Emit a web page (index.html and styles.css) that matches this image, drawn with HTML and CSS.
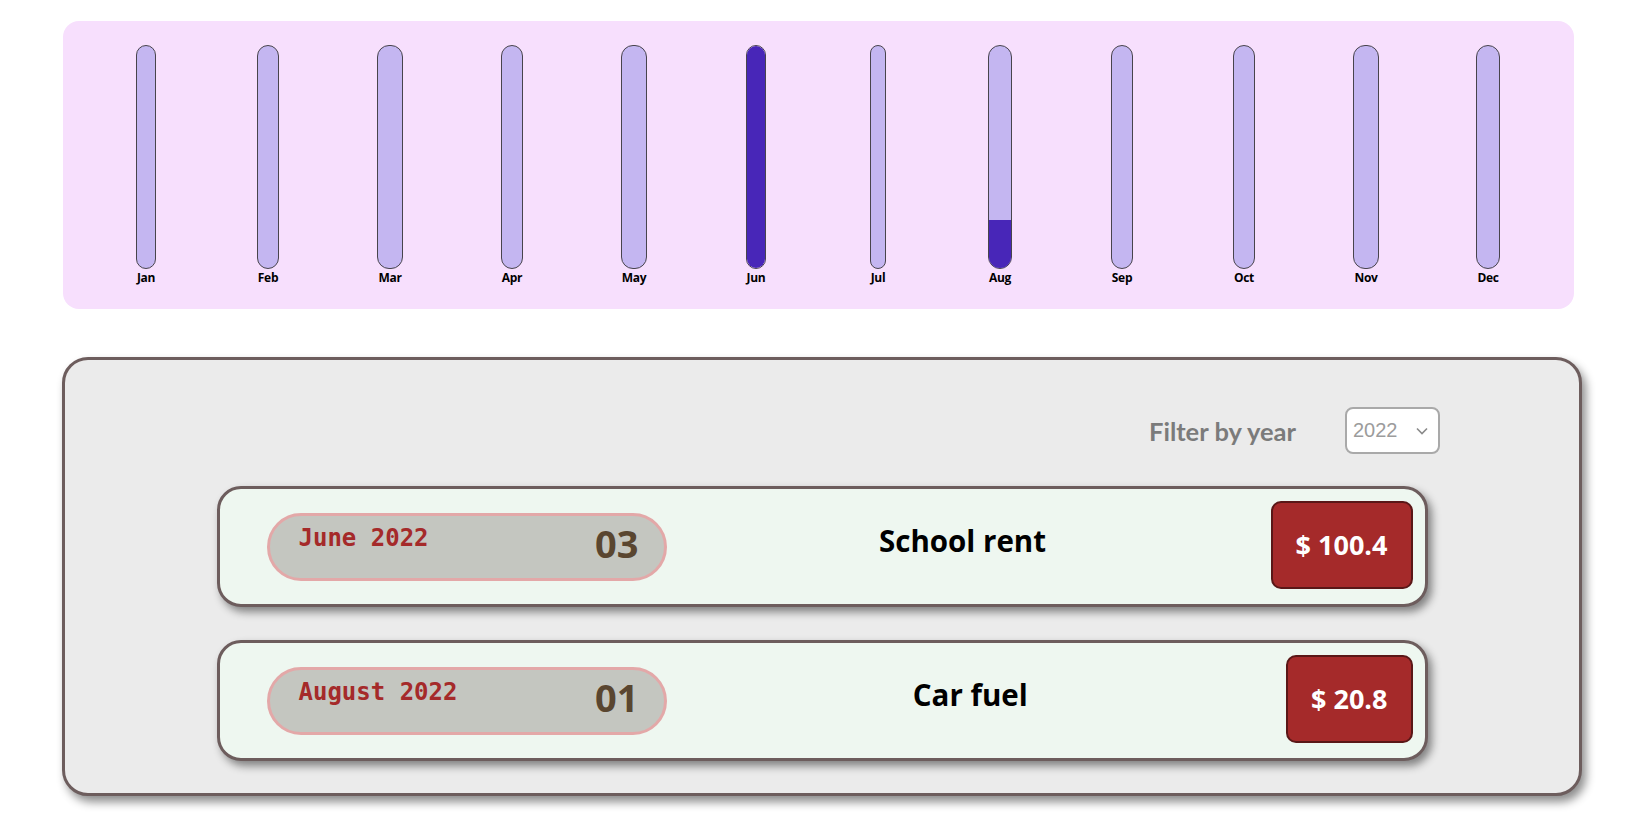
FILE: index.html
```html
<!DOCTYPE html>
<html lang="en">
<head>
<meta charset="utf-8">
<title>Expenses</title>
<link rel="stylesheet" href="styles.css">
</head>
<body>
<div class="page">
  <section class="chart">
    <div class="col"><div class="bar"><div class="fill" style="height:0%"></div></div><span class="lbl">Jan</span></div>
    <div class="col"><div class="bar"><div class="fill" style="height:0%"></div></div><span class="lbl">Feb</span></div>
    <div class="col"><div class="bar"><div class="fill" style="height:0%"></div></div><span class="lbl">Mar</span></div>
    <div class="col"><div class="bar"><div class="fill" style="height:0%"></div></div><span class="lbl">Apr</span></div>
    <div class="col"><div class="bar"><div class="fill" style="height:0%"></div></div><span class="lbl">May</span></div>
    <div class="col"><div class="bar"><div class="fill" style="height:100%"></div></div><span class="lbl">Jun</span></div>
    <div class="col"><div class="bar"><div class="fill" style="height:0%"></div></div><span class="lbl">Jul</span></div>
    <div class="col"><div class="bar"><div class="fill" style="height:21.5%"></div></div><span class="lbl">Aug</span></div>
    <div class="col"><div class="bar"><div class="fill" style="height:0%"></div></div><span class="lbl">Sep</span></div>
    <div class="col"><div class="bar"><div class="fill" style="height:0%"></div></div><span class="lbl">Oct</span></div>
    <div class="col"><div class="bar"><div class="fill" style="height:0%"></div></div><span class="lbl">Nov</span></div>
    <div class="col"><div class="bar"><div class="fill" style="height:0%"></div></div><span class="lbl">Dec</span></div>
  </section>

  <section class="card">
    <div class="filter">
      <span class="filter-label">Filter by year</span>
      <div class="select">
        <span>2022</span>
        <svg class="chev" width="12" height="8" viewBox="0 0 12 8"><path d="M1 1.5 L6 6.5 L11 1.5" fill="none" stroke="#8a8a8a" stroke-width="1.6"/></svg>
      </div>
    </div>

    <ul class="items">
      <li class="item">
        <div class="date">
          <span class="month">June 2022</span>
          <span class="day">03</span>
        </div>
        <h2 class="title">School rent</h2>
        <div class="amount">$ 100.4</div>
      </li>
      <li class="item">
        <div class="date">
          <span class="month">August 2022</span>
          <span class="day">01</span>
        </div>
        <h2 class="title">Car fuel</h2>
        <div class="amount">$ 20.8</div>
      </li>
    </ul>
  </section>
</div>
</body>
</html>
```
FILE: styles.css
```css
* { box-sizing: border-box; }
html, body { margin: 0; padding: 0; background: #ffffff; }
body { font-family: "Open Sans", "Noto Sans", sans-serif; }

.page {
  padding: 21px 0 40px 63px;
}

/* chart */
.chart {
  width: 1511px;
  height: 288px;
  background: #f7dffd;
  border-radius: 16px;
  padding: 24px 25px 0 22px;
  display: grid;
  grid-template-columns: repeat(12, 1fr);
  justify-items: center;
  align-items: start;
}
.col {
  display: inline-flex;
  flex-direction: column;
  align-items: stretch;
}
.bar {
  height: 224px;
  border: 1px solid #48444c;
  border-radius: 12px;
  background: #c4b6f1;
  overflow: hidden;
  display: flex;
  flex-direction: column;
  justify-content: flex-end;
}
.fill {
  background: #4826b8;
  width: 100%;
}
.lbl {
  font-family: "Open Sans", sans-serif;
  font-weight: 700;
  font-size: 12px;
  line-height: 17px;
  color: #000;
  text-align: center;
  padding: 0 1px;
  letter-spacing: -0.3px;
}

/* card */
.card {
  margin-top: 48px;
  margin-left: -1px;
  width: 1520px;
  background: #ebebeb;
  border: 3px solid #6d5d5d;
  border-radius: 26px;
  box-shadow: 4px 6px 10px rgba(0, 0, 0, 0.45);
  padding: 47px 0 32px 0;
}
.filter {
  display: flex;
  justify-content: flex-end;
  align-items: center;
  gap: 49px;
  padding-right: 139px;
}
.filter-label {
  font-family: "Lato", sans-serif;
  font-weight: 700;
  font-size: 25.5px;
  color: #7b7b7b;
}
.select {
  width: 95px;
  height: 47px;
  background: #fff;
  border: 2px solid #a9a9a9;
  border-radius: 8px;
  display: flex;
  align-items: center;
  justify-content: space-between;
  padding: 0 10px 0 6px;
  font-family: "Liberation Sans", Arial, sans-serif;
  font-size: 20px;
  color: #9c9c9c;
}
.chev { display: block; }

.items {
  list-style: none;
  margin: 32px 0 0 0;
  padding: 0;
  display: flex;
  flex-direction: column;
  align-items: center;
  gap: 33px;
}
.item {
  width: 1211px;
  height: 121px;
  background: #eef7f0;
  border: 3px solid #6d5d5d;
  border-radius: 24px;
  box-shadow: 4px 5px 8px rgba(0, 0, 0, 0.45);
  display: flex;
  align-items: center;
  padding: 0 12px 0 47px;
}
.date {
  width: 400px;
  height: 68px;
  background: #c4c6c0;
  border: 3px solid #e3a8a8;
  border-radius: 34px;
  display: flex;
  justify-content: space-between;
  align-items: center;
  padding: 0 25px 0 29px;
  flex-shrink: 0;
}
.month {
  align-self: flex-start;
  margin-top: 6px;
  font-family: "DejaVu Sans Mono", "Liberation Mono", monospace;
  font-weight: 700;
  font-size: 24px;
  line-height: 32px;
  color: #a52a2a;
}
.day {
  margin-bottom: 8px;
  font-family: "Open Sans", sans-serif;
  font-weight: 700;
  font-size: 38px;
  line-height: 44px;
  color: #5a4630;
}
.title {
  flex: 1;
  margin: 0 0 13px 0;
  padding-right: 12px;
  text-align: center;
  font-family: "Open Sans", sans-serif;
  font-weight: 700;
  font-size: 29.5px;
  color: #000;
}
.amount {
  height: 88px;
  margin-bottom: 4px;
  padding: 0 23px;
  background: #a52a2a;
  border: 2px solid #5a1717;
  border-radius: 10px;
  display: flex;
  align-items: center;
  justify-content: center;
  font-family: "Open Sans", sans-serif;
  font-weight: 700;
  font-size: 27px;
  color: #fff;
  flex-shrink: 0;
}
```
